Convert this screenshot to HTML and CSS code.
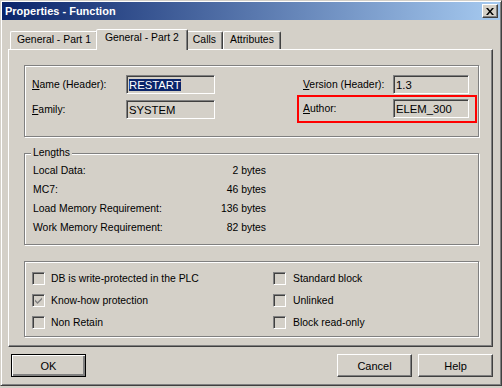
FILE: index.html
```html
<!DOCTYPE html>
<html>
  <head>
    <title>Properties - Function</title>
    <link rel="stylesheet" href="styles.css">
  </head>
  <body>
    <div class="window">
      <div class="titlebar">
        <span class="title">Properties - Function</span>
        <span class="close-btn">
          <svg width="8" height="7" viewBox="0 0 8 7">
            <path d="M0 0h2l2 2.5L6 0h2L5 3.5 8 7H6L4 4.5 2 7H0l3-3.5z" fill="#000"/>
          </svg>
        </span>
      </div>

      <div class="content">
        <div class="tabs">
          <div class="tab">General - Part 1</div>
          <div class="tab active">General - Part 2</div>
          <div class="tab">Calls</div>
          <div class="tab">Attributes</div>
        </div>

        <div class="panel">
          <div class="group header-group">
            <div class="col">
              <div class="field">
                <label class="label"><u>N</u>ame (Header):</label>
                <div class="input name-input"><span class="selected">RESTART</span></div>
              </div>
              <div class="field">
                <label class="label"><u>F</u>amily:</label>
                <div class="input name-input">SYSTEM</div>
              </div>
            </div>
            <div class="col right-col">
              <div class="field version-row">
                <label class="label"><u>V</u>ersion (Header):</label>
                <div class="input small-input">1.3</div>
              </div>
              <div class="field author-row">
                <label class="label"><u>A</u>uthor:</label>
                <div class="input small-input">ELEM_300</div>
              </div>
            </div>
          </div>

          <div class="group lengths-group">
            <span class="legend">Lengths</span>
            <div class="len-row"><span>Local Data:</span><span>2 bytes</span></div>
            <div class="len-row"><span>MC7:</span><span>46 bytes</span></div>
            <div class="len-row"><span>Load Memory Requirement:</span><span>136 bytes</span></div>
            <div class="len-row"><span>Work Memory Requirement:</span><span>82 bytes</span></div>
          </div>

          <div class="group options-group">
            <div class="opt-col">
              <div class="check-row"><span class="checkbox"></span>DB is write-protected in the PLC</div>
              <div class="check-row">
                <span class="checkbox">
                  <svg width="7" height="7" viewBox="0 0 7 7">
                    <path d="M0 2.5l2.5 2.5L7 0.5v2L2.5 7 0 4.5z" fill="#808080"/>
                  </svg>
                </span>Know-how protection
              </div>
              <div class="check-row"><span class="checkbox"></span>Non Retain</div>
            </div>
            <div class="opt-col right-opts">
              <div class="check-row"><span class="checkbox"></span>Standard block</div>
              <div class="check-row"><span class="checkbox"></span>Unlinked</div>
              <div class="check-row"><span class="checkbox"></span>Block read-only</div>
            </div>
          </div>
        </div>

        <div class="buttons">
          <button class="btn default">OK</button>
          <div class="spacer"></div>
          <button class="btn">Cancel</button>
          <button class="btn">Help</button>
        </div>
      </div>
    </div>
  </body>
</html>
```

FILE: styles.css
```css
body {
  margin: 0;
  background-color: #d4d0c8;
  font-family: "Liberation Sans", Arial, sans-serif;
  font-size: 10.4px;
  color: #000;
}

.window {
  width: 502px;
  height: 386px;
  box-sizing: border-box;
  border: 1px solid;
  border-color: #d4d0c8 #404040 #404040 #d4d0c8;
  box-shadow: inset 1px 1px #fff, inset -1px -1px #808080;
  padding: 1px;
  background-color: #d4d0c8;
}

.titlebar {
  height: 18px;
  display: flex;
  align-items: center;
  justify-content: space-between;
  padding: 0 2px 0 3px;
  background: linear-gradient(to right, #0a246a, #a6caf0);
}

.title {
  color: #fff;
  font-weight: bold;
  font-size: 11px;
}

.close-btn {
  width: 16px;
  height: 14px;
  box-sizing: border-box;
  display: flex;
  align-items: center;
  justify-content: center;
  background-color: #d4d0c8;
  border: 1px solid;
  border-color: #fff #404040 #404040 #fff;
  box-shadow: inset -1px -1px #808080;
}

.content {
  padding: 9px 7px 0 6px;
}

/* tabs */
.tabs {
  display: flex;
  align-items: flex-end;
  padding-left: 2px;
  height: 20px;
}

.tab {
  height: 17px;
  line-height: 16px;
  padding: 0 6px;
  border: 1px solid;
  border-bottom: none;
  border-color: #fff #404040 transparent #fff;
  box-shadow: inset -1px 0 #808080;
  border-radius: 2px 2px 0 0;
  white-space: nowrap;
}

.tab.active {
  position: relative;
  z-index: 1;
  height: 20px;
  line-height: 16px;
  margin: 0 -2px -1px;
  padding: 0 8px;
  background-color: #d4d0c8;
}

.panel {
  border: 1px solid;
  border-color: #fff #404040 #404040 #fff;
  box-shadow: inset -1px -1px #808080;
  padding: 15px 13px 9px 15px;
  display: flex;
  flex-direction: column;
  gap: 16px;
}

/* etched group box */
.group {
  position: relative;
  border: 1px solid #808080;
  box-shadow: inset 1px 1px #fff, 1px 1px #fff;
}

.header-group {
  display: flex;
  justify-content: space-between;
  padding: 9px 1px 13px 7px;
}

.col {
  display: flex;
  flex-direction: column;
  gap: 6px;
}

.right-col {
  width: 180px;
  gap: 1px;
}

.field {
  display: flex;
  align-items: center;
  height: 19px;
}

.label {
  width: 94px;
}

.right-col .label {
  width: 90px;
}

.version-row {
  padding: 0 8px 0 6px;
}

.author-row {
  border: 2px solid #ff0000;
  padding: 2px 6px 3px 4px;
}

.input {
  height: 19px;
  box-sizing: border-box;
  border: 1px solid;
  border-color: #808080 #fff #fff #808080;
  box-shadow: inset 1px 1px #404040;
  padding: 2px 3px 0 2px;
  line-height: 14px;
  font-size: 11.3px;
}

.name-input {
  width: 89px;
}

.small-input {
  width: 76px;
}

.selected {
  background-color: #0a246a;
  color: #fff;
}

/* lengths */
.lengths-group {
  padding: 7px 0 7px 8px;
}

.legend {
  position: absolute;
  top: -7px;
  left: 6px;
  padding: 0 2px;
  background-color: #d4d0c8;
}

.len-row {
  width: 233px;
  height: 19px;
  display: flex;
  align-items: center;
  justify-content: space-between;
}

/* checkboxes */
.options-group {
  display: flex;
  padding: 5px 0 3px 7px;
}

.opt-col {
  flex: none;
  width: 241px;
}

.right-opts {
  flex: 1;
}

.check-row {
  height: 22px;
  display: flex;
  align-items: center;
}

.checkbox {
  width: 13px;
  height: 13px;
  box-sizing: border-box;
  margin-right: 6px;
  border: 1px solid;
  border-color: #808080 #fff #fff #808080;
  box-shadow: inset 1px 1px #404040, inset -1px -1px #d4d0c8;
  display: flex;
  align-items: center;
  justify-content: center;
}

.right-opts .checkbox {
  margin-right: 7px;
}

/* bottom buttons */
.buttons {
  display: flex;
  gap: 6px;
  margin-top: 7px;
  padding-left: 3px;
}

.spacer {
  flex: 1;
}

.btn {
  width: 75px;
  height: 23px;
  font-family: inherit;
  font-size: 11px;
  background-color: #d4d0c8;
  border: 1px solid;
  border-color: #fff #404040 #404040 #fff;
  box-shadow: inset -1px -1px #808080;
  padding: 0;
}

.btn.default {
  border: 1px solid #000;
  box-shadow: inset 1px 1px #fff, inset -2px -2px #808080;
}
```
